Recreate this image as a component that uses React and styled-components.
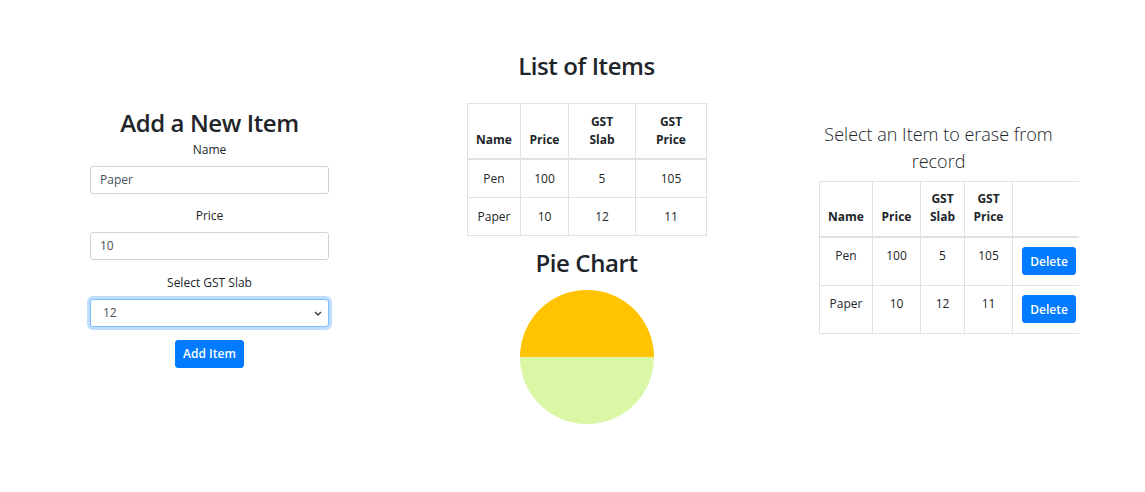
import styled, { createGlobalStyle } from 'styled-components'

const GlobalStyle = createGlobalStyle`
  body {
    margin: 0;
    font-family: 'Open Sans', 'Noto Sans', sans-serif;
    color: #212529;
    background: #fff;
  }
`

const Page = styled.div`
  display: flex;
  align-items: center;
  padding: 51px 0 0 90px;
`

const Column = styled.div`
  width: 239px;
  margin-left: ${(p) => p.$gap || 0}px;
  display: flex;
  flex-direction: column;
  align-items: stretch;
  text-align: center;
`

const Title = styled.h3`
  margin: 0 0 ${(p) => p.$mb || 0}px;
  margin-top: ${(p) => p.$mt || 0}px;
  font-size: 24px;
  font-weight: 600;
  line-height: 29px;
  letter-spacing: -0.4px;
`

const Lead = styled.p`
  margin: 0 0 6px;
  font-size: 18px;
  font-weight: 300;
  line-height: 27px;
`

const Group = styled.div`
  display: flex;
  flex-direction: column;
  margin-bottom: ${(p) => p.$mb || 13}px;
`

const Label = styled.label`
  font-size: 12px;
  line-height: 18px;
  margin-bottom: 7px;
`

const Input = styled.input`
  box-sizing: border-box;
  height: 28px;
  width: 100%;
  padding: 0 9px;
  border: 1px solid #ced4da;
  border-radius: 3px;
  font-family: inherit;
  font-size: 12px;
  color: #495057;
  outline: none;
`

const SelectWrap = styled.div`
  position: relative;
`

const Select = styled.select`
  box-sizing: border-box;
  height: 28px;
  width: 100%;
  padding: 0 12px;
  border: 1px solid #80bdff;
  border-radius: 3px;
  box-shadow: 0 0 0 3px rgba(0, 123, 255, 0.25);
  font-family: inherit;
  font-size: 12px;
  color: #495057;
  background: #fff;
  outline: none;
  appearance: none;
`

const Chevron = styled.svg`
  position: absolute;
  right: 7px;
  top: 12px;
  pointer-events: none;
`

const Button = styled.button`
  align-self: ${(p) => (p.$center ? 'center' : 'auto')};
  height: 28px;
  padding: 0 ${(p) => p.$px || 7}px;
  border: 1px solid #007bff;
  border-radius: 3px;
  background: #007bff;
  color: #fff;
  font-family: inherit;
  font-size: 12px;
  font-weight: 600;
  cursor: pointer;
`

const TableClip = styled.div`
  width: ${(p) => p.$width}px;
  overflow: hidden;
  margin-bottom: ${(p) => p.$mb || 0}px;
`

const Table = styled.table`
  width: ${(p) => p.$width}px;
  table-layout: fixed;
  border-collapse: collapse;
  font-size: 12px;
  line-height: 18px;
  text-align: center;

  th,
  td {
    padding: 9.5px 4px;
    border: 1px solid #dee2e6;
  }

  th {
    padding-top: 8.5px;
    vertical-align: bottom;
    font-weight: 700;
    border-bottom: 2px solid #dee2e6;
  }

  td {
    vertical-align: top;
  }
`

const Pie = styled.svg`
  display: block;
  align-self: center;
`

const items = [
  { name: 'Pen', price: 100, slab: 5, gst: 105 },
  { name: 'Paper', price: 10, slab: 12, gst: 11 },
]

function ItemTable({ widths, withDelete }) {
  const total = widths.reduce((a, b) => a + b, 0)
  return (
    <Table $width={total}>
      <colgroup>
        {widths.map((w, i) => (
          <col key={i} style={{ width: w }} />
        ))}
      </colgroup>
      <thead>
        <tr>
          <th>Name</th>
          <th>Price</th>
          <th>
            GST
            <br />
            Slab
          </th>
          <th>
            GST
            <br />
            Price
          </th>
          {withDelete && <th />}
        </tr>
      </thead>
      <tbody>
        {items.map((it) => (
          <tr key={it.name}>
            <td>{it.name}</td>
            <td>{it.price}</td>
            <td>{it.slab}</td>
            <td>{it.gst}</td>
            {withDelete && (
              <td>
                <Button>Delete</Button>
              </td>
            )}
          </tr>
        ))}
      </tbody>
    </Table>
  )
}

export default function App() {
  return (
    <>
      <GlobalStyle />
      <Page>
        <Column>
          <Title $mb={4}>Add a New Item</Title>
          <Group>
            <Label>Name</Label>
            <Input defaultValue="Paper" />
          </Group>
          <Group $mb={14}>
            <Label>Price</Label>
            <Input defaultValue="10" />
          </Group>
          <Group>
            <Label>Select GST Slab</Label>
            <SelectWrap>
              <Select defaultValue="12">
                <option value="5">5</option>
                <option value="12">12</option>
                <option value="18">18</option>
                <option value="28">28</option>
              </Select>
              <Chevron width="8" height="5" viewBox="0 0 8 5">
                <path d="M1 1 L4 4 L7 1" fill="none" stroke="#343a40" strokeWidth="1.3" />
              </Chevron>
            </SelectWrap>
          </Group>
          <Button $center>Add Item</Button>
        </Column>

        <Column $gap={138}>
          <Title $mb={23}>List of Items</Title>
          <ItemTable widths={[53, 48, 67, 71]} />
          <Title $mt={12} $mb={13}>Pie Chart</Title>
          <Pie width="134" height="134" viewBox="0 0 134 134">
            <path d="M0 67 A67 67 0 0 1 134 67 Z" fill="#FFC300" />
            <path d="M134 67 A67 67 0 0 1 0 67 Z" fill="#DAF7A6" />
          </Pie>
        </Column>

        <Column $gap={113}>
          <Lead>Select an Item to erase from record</Lead>
          <TableClip $width={260} $mb={21}>
            <ItemTable widths={[53, 48, 44, 48, 73]} withDelete />
          </TableClip>
        </Column>
      </Page>
    </>
  )
}
